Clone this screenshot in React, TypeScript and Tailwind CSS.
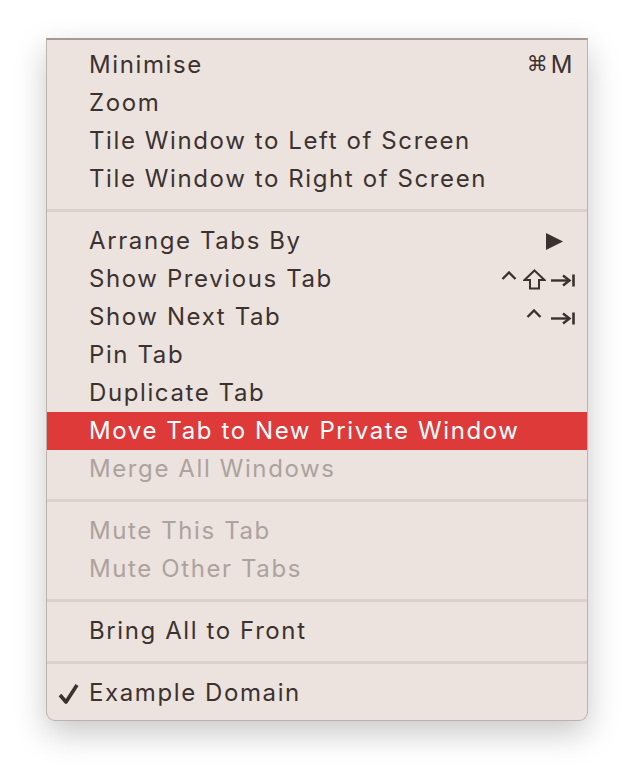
// Safari-style "Window" menu, open over a white page.

type Item =
  | { kind: "item"; label: string; disabled?: boolean; active?: boolean; checked?: boolean; shortcut?: React.ReactNode }
  | { kind: "sep" };

function Caret() {
  return (
    <svg width="16" height="9" viewBox="0 0 16 9" className="block">
      <polyline points="1.5,8 8,1.5 14.5,8" fill="none" stroke="currentColor" strokeWidth="2.4" />
    </svg>
  );
}

function Shift() {
  return (
    <svg width="23" height="21" viewBox="0 0 23 21" className="block">
      <path d="M11.5 1.5 L21.5 11 L16 11 L16 19.5 L7 19.5 L7 11 L1.5 11 Z" fill="none" stroke="currentColor" strokeWidth="2" strokeLinejoin="miter" />
    </svg>
  );
}

function TabKey() {
  return (
    <svg width="24" height="13" viewBox="0 0 24 13" className="block">
      <path d="M0 6.5 H18" stroke="currentColor" strokeWidth="2.4" />
      <path d="M12 1.5 L18.5 6.5 L12 11.5" fill="none" stroke="currentColor" strokeWidth="2.4" />
      <path d="M22.5 0.5 V12.5" stroke="currentColor" strokeWidth="2.6" />
    </svg>
  );
}

const ITEMS: Item[] = [
  {
    kind: "item",
    label: "Minimise",
    shortcut: (
      <span className="mr-[14px] flex items-center">
        <span className="mr-[3px] font-['DejaVu_Sans',sans-serif] text-[21px]">⌘</span>
        <span className="tracking-[0.5px]">M</span>
      </span>
    ),
  },
  { kind: "item", label: "Zoom" },
  { kind: "item", label: "Tile Window to Left of Screen" },
  { kind: "item", label: "Tile Window to Right of Screen" },
  { kind: "sep" },
  {
    kind: "item",
    label: "Arrange Tabs By",
    shortcut: (
      <svg width="17" height="17" viewBox="0 0 17 17" className="mr-[24px] block">
        <path d="M0 0 L17 8.5 L0 17 Z" fill="currentColor" />
      </svg>
    ),
  },
  {
    kind: "item",
    label: "Show Previous Tab",
    shortcut: (
      <span className="mr-[12px] flex items-center">
        <span className="-mt-[8px]"><Caret /></span>
        <span className="ml-[6px]"><Shift /></span>
        <span className="ml-[5px] mt-[2px]"><TabKey /></span>
      </span>
    ),
  },
  {
    kind: "item",
    label: "Show Next Tab",
    shortcut: (
      <span className="mr-[12px] flex items-center">
        <span className="-mt-[8px]"><Caret /></span>
        <span className="ml-[9px] mt-[2px]"><TabKey /></span>
      </span>
    ),
  },
  { kind: "item", label: "Pin Tab" },
  { kind: "item", label: "Duplicate Tab" },
  { kind: "item", label: "Move Tab to New Private Window", active: true },
  { kind: "item", label: "Merge All Windows", disabled: true },
  { kind: "sep" },
  { kind: "item", label: "Mute This Tab", disabled: true },
  { kind: "item", label: "Mute Other Tabs", disabled: true },
  { kind: "sep" },
  { kind: "item", label: "Bring All to Front" },
  { kind: "sep" },
  { kind: "item", label: "Example Domain", checked: true },
];

export default function App() {
  return (
    <div className="h-[774px] w-[634px] bg-white pt-[38px] pl-[46px] font-['Inter',sans-serif]">
      <div className="w-[542px] overflow-hidden rounded-b-[9px] border border-t-2 border-[#bdb3ae] border-t-[#a59991] bg-[#ece2de] pt-[6px] pb-[8px] text-[24px] text-[#3b3230] shadow-[0_12px_32px_rgba(0,0,0,0.22)]">
        {ITEMS.map((it, i) =>
          it.kind === "sep" ? (
            <div key={i} className="flex h-[24px] items-center">
              <div className="h-[3px] w-full bg-[#dcd0cc]" />
            </div>
          ) : (
            <div
              key={i}
              className={
                "flex h-[38px] items-center justify-between " +
                (it.active ? "bg-[#de3a3a] text-white" : it.disabled ? "text-[#aca29e]" : "")
              }
            >
              <div className="flex items-center">
                <span className="flex w-[42px] justify-end pr-[10px]">
                  {it.checked && (
                    <svg width="21" height="21" viewBox="0 0 21 21" className="block">
                      <path d="M2 12 L8 19 L19 2" fill="none" stroke="currentColor" strokeWidth="3.6" strokeLinejoin="round" />
                    </svg>
                  )}
                </span>
                <span className="tracking-[1.6px]">{it.label}</span>
              </div>
              {it.shortcut}
            </div>
          )
        )}
      </div>
    </div>
  );
}
